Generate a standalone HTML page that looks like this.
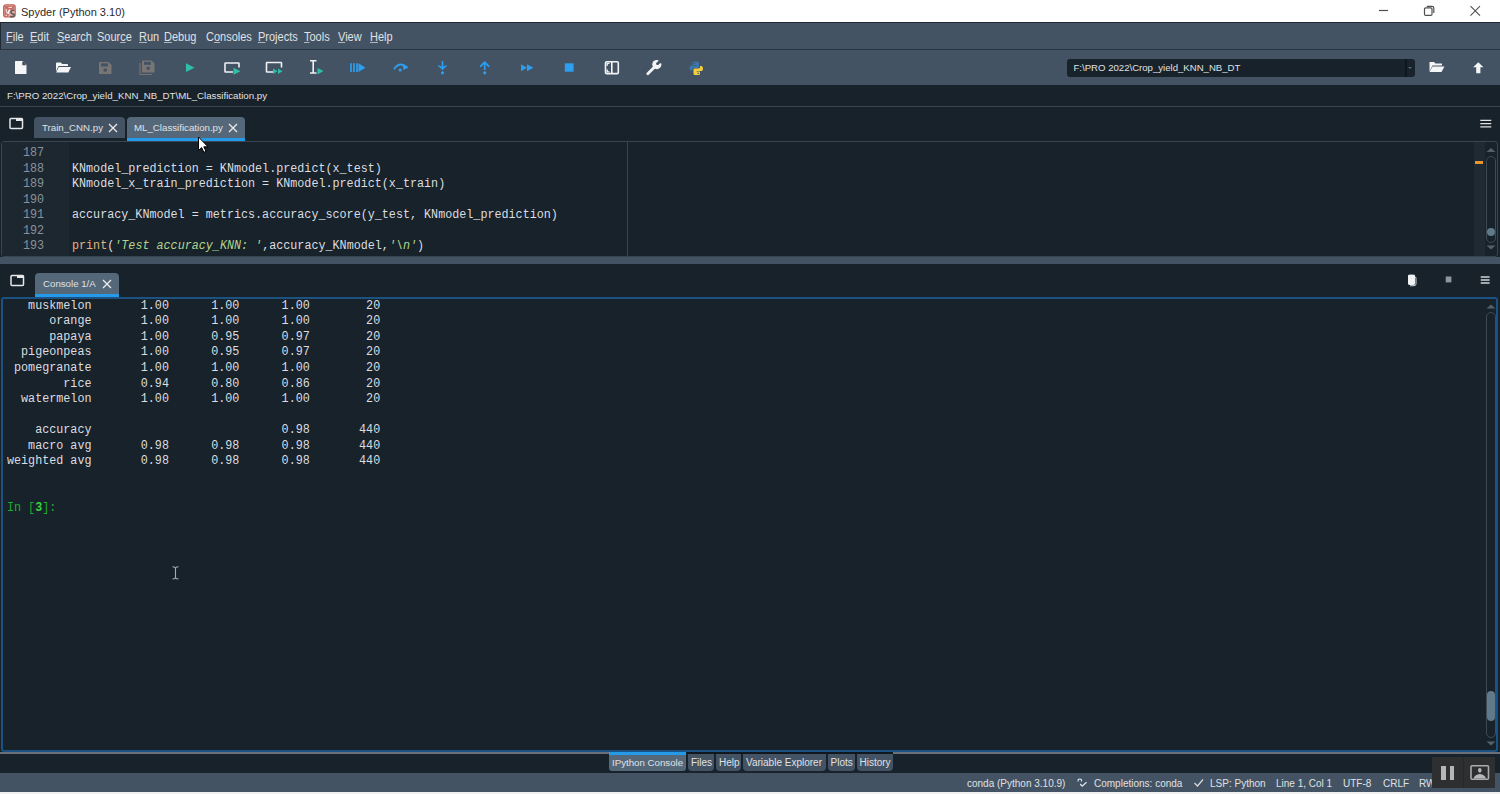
<!DOCTYPE html>
<html><head><meta charset="utf-8">
<style>
html,body{margin:0;padding:0;}
body{width:1500px;height:794px;overflow:hidden;position:relative;background:#17222a;font-family:"Liberation Sans",sans-serif;}
.a{position:absolute;}
.ui{font-family:"Liberation Sans",sans-serif;white-space:pre;}
.mono{font-family:"Liberation Mono",monospace;white-space:pre;}
#title{left:0;top:0;width:1500px;height:22px;background:#fff;}
#menubar{left:0;top:22px;width:1500px;height:28px;background:#435363;box-sizing:border-box;border-top:1px solid #1f2933;border-bottom:1px solid #2a3440;}
.menu{top:6.5px;font-size:12px;color:#E0E1E3;transform:scaleX(0.915);transform-origin:0 0;}
.menu u{text-decoration:underline;text-decoration-color:#aeb6be;text-underline-offset:0.6px;}
#toolbar{left:0;top:50px;width:1500px;height:35px;background:#435363;}
#pathbar{left:0;top:85px;width:1500px;height:21px;background:#17222a;border-bottom:1px solid #3b4654;}
.tab{background:#435363;border-radius:4px 4px 0 0;box-sizing:border-box;font-size:9.7px;color:#E0E1E3;}
.code{font-size:12.5px;line-height:15.55px;transform:scaleX(0.9387);transform-origin:0 0;}
.btab{background:#435363;border-radius:0 0 4px 4px;box-sizing:border-box;font-size:9.7px;color:#E0E1E3;white-space:pre;font-family:"Liberation Sans",sans-serif;}
.frame{box-sizing:border-box;border:1px solid #3a4552;border-radius:3px;}
</style></head><body>

<!-- TITLE BAR -->
<div id="title" class="a">
  <svg class="a" style="left:3px;top:4px" width="13" height="14">
    <rect x="0.6" y="0.8" width="11.6" height="12.2" rx="2.2" fill="#e9b4ae" stroke="#c4625a" stroke-width="1.2"/>
    <path d="M1.5 2 L11 2 L11 5 L7.5 6 L5 13 L1.5 13 Z" fill="#c86c64"/>
    <path d="M5.5 3.5 L9 3.3 M3 5 L4 9 M2.5 11 L4 11.5" stroke="#f5dcd9" stroke-width="1.2"/>
    <path d="M6.6 5.5 L4.8 10" stroke="#fff" stroke-width="1.5"/>
    <path d="M11.5 6.5 Q8.5 5.8 8 7.8 Q7.8 9.3 10 10 Q11.8 10.8 11 12 Q10 13 7 12.5" fill="none" stroke="#5a5a5a" stroke-width="1.6"/>
  </svg>
  <div class="a ui" style="left:21px;top:5.5px;font-size:11px;color:#2a2a2a;">Spyder (Python 3.10)</div>
  <svg class="a" style="left:1370px;top:0" width="130" height="22">
    <path d="M9 10.5 H18" stroke="#505050" stroke-width="1.2"/>
    <rect x="54.5" y="7.8" width="7.5" height="7.6" rx="1.2" fill="none" stroke="#505050" stroke-width="1.2"/>
    <path d="M56.8 6.3 H62 Q63.8 6.3 63.8 8.1 V13" fill="none" stroke="#505050" stroke-width="1.2"/>
    <path d="M100.5 6.2 L110 15.7 M110 6.2 L100.5 15.7" stroke="#505050" stroke-width="1.1"/>
  </svg>
</div>

<!-- MENU BAR -->
<div id="menubar" class="a">
  <div class="a" style="left:0;top:0;width:1px;height:26px;background:#1f2933"></div>
  <div class="a menu ui" style="left:6px"><u>F</u>ile</div>
  <div class="a menu ui" style="left:29.5px"><u>E</u>dit</div>
  <div class="a menu ui" style="left:56.5px"><u>S</u>earch</div>
  <div class="a menu ui" style="left:97px">Sour<u>c</u>e</div>
  <div class="a menu ui" style="left:138.5px"><u>R</u>un</div>
  <div class="a menu ui" style="left:164px"><u>D</u>ebug</div>
  <div class="a menu ui" style="left:205.5px">C<u>o</u>nsoles</div>
  <div class="a menu ui" style="left:258px"><u>P</u>rojects</div>
  <div class="a menu ui" style="left:304px"><u>T</u>ools</div>
  <div class="a menu ui" style="left:338px"><u>V</u>iew</div>
  <div class="a menu ui" style="left:370px"><u>H</u>elp</div>
</div>

<!-- TOOLBAR -->
<div id="toolbar" class="a">
<svg class="a" style="left:0;top:0" width="720" height="35">
  <!-- new file -->
  <path d="M15 11.5 Q15 11 15.5 11 L22.5 11 L26.5 15 L26.5 23.5 Q26.5 24 26 24 L15.5 24 Q15 24 15 23.5 Z" fill="#f4f5f6"/>
  <path d="M22.3 11.3 L22.3 15.2 L26.2 15.2 Z" fill="#435363"/>
  <path d="M23 11.8 L23 14.6 L25.8 14.6 Z" fill="#3a4350"/>
  <!-- open folder -->
  <path d="M56 13.3 Q56 12.5 56.8 12.5 L60.8 12.5 L62.3 14 L67.2 14 Q68 14 68 14.8 L68 16 L58.5 16 L56 21.5 Z" fill="#f4f5f6"/>
  <path d="M58.8 16.9 L71 16.9 L68.3 22.6 L56.2 22.6 Z" fill="#f4f5f6"/>
  <!-- save (disabled) -->
  <path d="M99 12.5 Q99 12 99.5 12 L108.5 12 L111.5 15 L111.5 23.5 Q111.5 24 111 24 L99.5 24 Q99 24 99 23.5 Z" fill="#787674"/>
  <rect x="101" y="13.3" width="7" height="3.2" fill="#435363"/>
  <circle cx="105.2" cy="20" r="1.8" fill="#435363"/>
  <!-- save all (disabled) -->
  <path d="M140 13 L140 24.5 L152 24.5" fill="none" stroke="#74726f" stroke-width="1.2"/>
  <path d="M142 11 Q142 10.5 142.5 10.5 L151.5 10.5 L154.5 13.5 L154.5 22 Q154.5 22.5 154 22.5 L142.5 22.5 Q142 22.5 142 22 Z" fill="#787674"/>
  <rect x="144" y="11.8" width="7" height="3" fill="#435363"/>
  <circle cx="148.2" cy="18.3" r="1.8" fill="#435363"/>
  <!-- run -->
  <path d="M186 13.3 L194.5 17.7 L186 22 Z" fill="#2fbfa9"/>
  <!-- run cell -->
  <path d="M233 22 L225.5 22 Q225 22 225 21.5 L225 13.5 Q225 13 225.5 13 L238.5 13 Q239 13 239 13.5 L239 17.5" fill="none" stroke="#eef0f2" stroke-width="1.6"/>
  <path d="M233.5 17.8 L240.5 21.2 L233.5 24.7 Z" fill="#2fbfa9"/>
  <!-- run cell and advance -->
  <path d="M273 22 L267 22 Q266.5 22 266.5 21.5 L266.5 13 Q266.5 12.5 267 12.5 L281 12.5 Q281.5 12.5 281.5 13 L281.5 17.5" fill="none" stroke="#eef0f2" stroke-width="1.6"/>
  <path d="M273 18.5 L277.5 21.3 L273 24 Z M278 18.5 L282.5 21.3 L278 24 Z" fill="#2fbfa9"/>
  <!-- run selection -->
  <path d="M310 10.8 L316.5 10.8 M313.2 10.8 L313.2 23 M310 23 L316.5 23" fill="none" stroke="#eef0f2" stroke-width="1.6"/>
  <path d="M317.5 18 L323.5 21 L317.5 24.5 Z" fill="#2fbfa9"/>
  <!-- debug -->
  <path d="M351 13.3 L351 22 M354 13.3 L354 22 M357 13.3 L357 22" stroke="#2c9ff0" stroke-width="1.7"/>
  <path d="M358.5 13.3 L365.5 17.7 L358.5 22 Z" fill="#2c9ff0"/>
  <!-- step -->
  <path d="M394.3 18.6 Q399.5 12 405 16" fill="none" stroke="#2c9ff0" stroke-width="1.7" stroke-linecap="round"/>
  <path d="M403 14.2 L408.2 17.2 L403.6 19.6 Z" fill="#2c9ff0" stroke="#2c9ff0" stroke-width="0.6" stroke-linejoin="round"/>
  <circle cx="400.2" cy="20" r="1.6" fill="#2c9ff0"/>
  <!-- step into -->
  <path d="M442.5 11 L442.5 17" fill="none" stroke="#2c9ff0" stroke-width="1.6"/>
  <path d="M438.2 15.6 L442.5 17.2 L446.8 15.6 L442.5 19.8 Z" fill="#2c9ff0" stroke="#2c9ff0" stroke-width="0.8" stroke-linejoin="round"/>
  <circle cx="442.5" cy="22.8" r="1.6" fill="#2c9ff0"/>
  <!-- step return -->
  <path d="M484.7 12.5 L484.7 20" fill="none" stroke="#2c9ff0" stroke-width="1.6"/>
  <path d="M480.8 16.2 L484.7 12.2 L488.6 16.2" fill="none" stroke="#2c9ff0" stroke-width="1.8" stroke-linecap="round"/>
  <circle cx="484.7" cy="22.8" r="1.6" fill="#2c9ff0"/>
  <!-- continue -->
  <path d="M521 14.3 L527 17.7 L521 21.3 Z M527 14.3 L533.3 17.7 L527 21.3 Z" fill="#2c9ff0"/>
  <!-- stop -->
  <rect x="564.8" y="13.3" width="8.8" height="8.4" fill="#2c9ff0"/>
  <!-- maximize pane -->
  <rect x="605.5" y="61.8" width="12.8" height="11.8" rx="1.2" fill="none" stroke="#f2f3f5" stroke-width="1.6" transform="translate(0,-50)"/>
  <path d="M611.8 11.8 L611.8 23.6" stroke="#f2f3f5" stroke-width="1.6"/>
  <path d="M609.5 13.4 L607.2 13.4 L607.2 15.8 M607.2 19.4 L607.2 21.9 L609.5 21.9" fill="none" stroke="#f2f3f5" stroke-width="1.4"/>
  <!-- wrench -->
  <path d="M647.8 23.8 L654.3 17.3" stroke="#f2f3f5" stroke-width="2.8" stroke-linecap="round"/>
  <circle cx="656.8" cy="14.6" r="4.6" fill="#f2f3f5"/>
  <path d="M656.6 14.6 L659.2 8.8 L663.2 12.6 Z" fill="#435363"/>
  <circle cx="657.6" cy="13.6" r="1.5" fill="#435363"/>
  <!-- python -->
  <g transform="translate(689,11)">
  <path d="M4.5 0.5 H8.5 Q10 0.5 10 2 V6 Q10 7 9 7 H5 Q3.5 7 3.5 8.5 V9.5 H2 Q0.5 9.5 0.5 7 Q0.5 4.5 2 4.5 H7 V4 H3.5 V2 Q3.5 0.5 4.5 0.5 Z" fill="#3b77ad"/>
  <path d="M10 14 H6 Q4.5 14 4.5 12.5 V8.5 Q4.5 7.5 5.5 7.5 H9.5 Q11 7.5 11 6 V5 H12.5 Q14 5 14 7.5 Q14 10 12.5 10 H7.5 V10.5 H11 V12.5 Q11 14 10 14 Z" fill="#f3ce3f"/>
  <circle cx="5.3" cy="2.2" r="0.8" fill="#435363"/>
  <circle cx="9.2" cy="12.3" r="0.8" fill="#435363"/>
  </g>
</svg>
<!-- path combobox -->
<div class="a" style="left:1067px;top:9px;width:348px;height:17.5px;background:#17222a;border-radius:3px;"></div>
<div class="a" style="left:1404.5px;top:9px;width:2px;height:17.5px;background:#0f171e"></div>
<div class="a" style="left:1408px;top:17px;width:0;height:0;border-left:2px solid transparent;border-right:2px solid transparent;border-top:2px solid #5b6672"></div>
<div class="a ui" style="left:1073.5px;top:12px;font-size:9.6px;color:#E0E1E3">F:\PRO 2022\Crop_yield_KNN_NB_DT</div>
<svg class="a" style="left:1420px;top:0" width="80" height="35">
  <path d="M9.5 12 L14 12 L15.5 13.5 L22 13.5 L22 15.5 L12.5 15.5 L9.5 21.5 Z" fill="#f4f5f6"/>
  <path d="M12.5 16.5 L24.5 16.5 L21.5 22 L9.5 22 Z" fill="#f4f5f6"/>
  <path d="M58.3 12.3 L63.4 17.3 L60.4 17.3 L60.4 23.2 L56.2 23.2 L56.2 17.3 L53.2 17.3 Z" fill="#f4f5f6"/>
</svg>
</div>

<!-- PATH BAR -->
<div id="pathbar" class="a">
  <div class="a ui" style="left:7px;top:5px;font-size:9.7px;color:#E0E1E3">F:\PRO 2022\Crop_yield_KNN_NB_DT\ML_Classification.py</div>
</div>

<!-- EDITOR TABS -->
<svg class="a" style="left:9px;top:117px" width="16" height="14"><rect x="1" y="1.5" width="12.5" height="10" rx="1" fill="none" stroke="#e6e8ea" stroke-width="1.5"/><rect x="7" y="1.5" width="6.5" height="2.5" fill="#e6e8ea"/></svg>
<div class="a tab" style="left:34px;top:117px;width:91px;height:21px;"><span class="a" style="left:8px;top:5px">Train_CNN.py</span>
<svg class="a" style="left:74px;top:5.5px" width="10" height="10"><path d="M1 1L9 9M9 1L1 9" stroke="#e8eaec" stroke-width="1.3"/></svg></div>
<div class="a tab" style="left:127px;top:117px;width:118px;height:24px;background:#54687A;border-bottom:3px solid #259AE9"><span class="a" style="left:7px;top:5px">ML_Classification.py</span>
<svg class="a" style="left:101px;top:5.5px" width="10" height="10"><path d="M1 1L9 9M9 1L1 9" stroke="#e8eaec" stroke-width="1.3"/></svg></div>
<!-- editor hamburger -->
<svg class="a" style="left:1480px;top:118px" width="12" height="12"><path d="M0.3 2.3H11.3M0.3 5.6H11.3M0.3 8.9H11.3" stroke="#e0e2e4" stroke-width="1.3"/></svg>
<!-- EDITOR -->
<div class="a frame" style="left:1px;top:141px;width:1497px;height:116px;"></div>
<div class="a" style="left:2px;top:142px;width:67px;height:114px;background:#1d2730"></div>
<div class="a" style="left:1474px;top:142px;width:11px;height:114px;background:#202a33"></div>
<div class="a" style="left:1475px;top:161px;width:8px;height:3px;background:#e8962a"></div>
<div class="a" style="left:627px;top:142px;width:1px;height:114px;background:#39434f"></div>
<div class="a mono code" style="left:0;top:146px;width:47px;text-align:right;color:#87919a">187
188
189
190
191
192
193</div>
<div class="a mono code" style="left:72px;top:146px;color:#dcdde0">
KNmodel_prediction = KNmodel.predict(x_test)
KNmodel_x_train_prediction = KNmodel.predict(x_train)

accuracy_KNmodel = metrics.accuracy_score(y_test, KNmodel_prediction)

<span style="color:#e2b27c">print</span>(<span style="color:#b3d48e;font-style:italic">'Test accuracy_KNN: '</span>,accuracy_KNmodel,<span style="color:#b3d48e;font-style:italic">'\n'</span>)</div>
<!-- editor scrollbar -->
<svg class="a" style="left:1485px;top:147px" width="12" height="105">
  <path d="M1.5 5 L6 1 L10.5 5 Z" fill="#55606c"/>
  <rect x="1.5" y="9.5" width="9" height="86" rx="4.5" fill="none" stroke="#3f4a56" stroke-width="1"/>
  <circle cx="6" cy="85" r="4" fill="#60798B"/>
  <path d="M1.5 98.5 L10.5 98.5 L6 102.5 Z" fill="#55606c"/>
</svg>

<!-- SPLITTER -->
<div class="a" style="left:0;top:257px;width:1500px;height:7px;background:#435363"></div>

<!-- CONSOLE TAB -->
<svg class="a" style="left:10px;top:274px" width="16" height="14"><rect x="1" y="1.5" width="12.5" height="10" rx="1" fill="none" stroke="#e6e8ea" stroke-width="1.5"/><rect x="7" y="1.5" width="6.5" height="2.5" fill="#e6e8ea"/></svg>
<div class="a tab" style="left:35px;top:273px;width:84px;height:24px;background:#54687A;border-bottom:3px solid #259AE9"><span class="a" style="left:8px;top:5px">Console 1/A</span>
<svg class="a" style="left:67px;top:5.5px" width="10" height="10"><path d="M1 1L9 9M9 1L1 9" stroke="#e8eaec" stroke-width="1.3"/></svg></div>
<!-- console right icons -->
<svg class="a" style="left:1405px;top:272px" width="90" height="16">
  <path d="M3 3.5 Q3 2.5 6.5 2.5 Q10 2.5 10 3.5 L10 12 Q10 13 6.5 13 Q3 13 3 12 Z" fill="#f0f1f3"/>
  <path d="M10 5 L11 5.5 L11 12.5 Q11 13.8 7 13.8 L5 13.8" fill="none" stroke="#d8dadc" stroke-width="1"/>
  <rect x="40.7" y="4.5" width="5.7" height="5.9" fill="#8f969d"/>
  <path d="M75.7 5H84.6M75.7 8H84.6M75.7 11H84.6" stroke="#d0d3d6" stroke-width="1.4"/>
</svg>
<!-- CONSOLE -->
<div class="a frame" style="left:1px;top:297px;width:1497px;height:455px;border:2px solid #1c5282;"></div>
<div class="a mono code" style="left:6.7px;top:298.8px;color:#dcdde0">   muskmelon       1.00      1.00      1.00        20
      orange       1.00      1.00      1.00        20
      papaya       1.00      0.95      0.97        20
  pigeonpeas       1.00      0.95      0.97        20
 pomegranate       1.00      1.00      1.00        20
        rice       0.94      0.80      0.86        20
  watermelon       1.00      1.00      1.00        20

    accuracy                           0.98       440
   macro avg       0.98      0.98      0.98       440
weighted avg       0.98      0.98      0.98       440


<span style="color:#1fae2a">In [</span><span style="color:#38d43f;font-weight:bold">3</span><span style="color:#1fae2a">]:</span></div>
<!-- console scrollbar -->
<svg class="a" style="left:1485px;top:303px" width="12" height="445">
  <path d="M1.5 5.5 L6 1.5 L10.5 5.5 Z" fill="#55606c"/>
  <rect x="1.5" y="9.5" width="9" height="425" rx="4.5" fill="none" stroke="#3f4a56" stroke-width="1"/>
  <rect x="2" y="388" width="8" height="30" rx="4" fill="#60798B"/>
  <path d="M1.5 438.5 L10.5 438.5 L6 442.5 Z" fill="#55606c"/>
</svg>

<!-- BOTTOM -->
<div class="a" style="left:0;top:752px;width:609px;height:1.5px;background:#6a7078"></div>
<div class="a" style="left:893px;top:752px;width:607px;height:1.5px;background:#6a7078"></div>
<div class="a" style="left:687px;top:752px;width:206px;height:1.5px;background:#10171e"></div>
<div class="a btab" style="left:609px;top:752px;width:77px;height:19px;background:#54687A;border-top:3px solid #259AE9;border-radius:0 0 3px 3px"><span class="a" style="left:3px;top:1.8px">IPython Console</span></div>
<div class="a btab" style="left:688px;top:753.5px;width:26px;height:17.5px;"><span class="a" style="left:3px;top:3.2px;font-size:10px">Files</span></div>
<div class="a btab" style="left:716px;top:753.5px;width:25px;height:17.5px;"><span class="a" style="left:3px;top:3.2px;font-size:10px">Help</span></div>
<div class="a btab" style="left:743px;top:753.5px;width:83px;height:17.5px;"><span class="a" style="left:3px;top:3.2px;font-size:10px">Variable Explorer</span></div>
<div class="a btab" style="left:827.5px;top:753.5px;width:27px;height:17.5px;"><span class="a" style="left:3px;top:3.2px;font-size:10px">Plots</span></div>
<div class="a btab" style="left:856.5px;top:753.5px;width:36px;height:17.5px;"><span class="a" style="left:3px;top:3.2px;font-size:10px">History</span></div>
<div class="a" style="left:0;top:773px;width:1500px;height:19px;background:#435363"></div>
<div class="a ui" style="left:967px;top:778px;font-size:10px;color:#E0E1E3">conda (Python 3.10.9)</div>
<svg class="a" style="left:1076px;top:777px" width="13" height="12"><path d="M2.2 4.5 Q1.5 2 3.8 2 Q6 2 5.4 4.5" fill="none" stroke="#e6e8ea" stroke-width="1.1"/><path d="M4.2 7 L6.2 9.2 L10.5 5.2" fill="none" stroke="#e6e8ea" stroke-width="1.2"/></svg>
<div class="a ui" style="left:1094px;top:778px;font-size:10px;color:#E0E1E3">Completions: conda</div>
<svg class="a" style="left:1193px;top:777px" width="12" height="12"><path d="M1.5 6 L4.5 9 L10 2.5" fill="none" stroke="#d9dcdf" stroke-width="1.2"/></svg>
<div class="a ui" style="left:1210px;top:778px;font-size:10px;color:#E0E1E3">LSP: Python</div>
<div class="a ui" style="left:1276px;top:778px;font-size:10px;color:#E0E1E3">Line 1, Col 1</div>
<div class="a ui" style="left:1343px;top:778px;font-size:10px;color:#E0E1E3">UTF-8</div>
<div class="a ui" style="left:1383px;top:778px;font-size:10px;color:#E0E1E3">CRLF</div>
<div class="a ui" style="left:1419px;top:778px;font-size:10px;color:#E0E1E3">RW</div>
<!-- overlay buttons (video player) -->
<div class="a" style="left:1432px;top:756.5px;width:31px;height:31px;background:#2e2f30"></div>
<div class="a" style="left:1463px;top:756.5px;width:32px;height:31px;background:#2e2f30;border-left:1px solid #26282a;box-sizing:border-box"></div>
<div class="a" style="left:1441px;top:766px;width:4.5px;height:14px;background:#b3b5b6"></div>
<div class="a" style="left:1449.5px;top:766px;width:4.5px;height:14px;background:#b3b5b6"></div>
<svg class="a" style="left:1468px;top:764px" width="24" height="18"><rect x="3" y="1.8" width="17.5" height="13.5" rx="1" fill="none" stroke="#a9abac" stroke-width="1.6"/><ellipse cx="11.8" cy="6.3" rx="1.7" ry="2.4" fill="#b5b7b8"/><path d="M5.5 14.5 Q6.5 10.5 11.8 10 Q17 10.5 18 14.5 Z" fill="#b5b7b8"/></svg>
<div class="a" style="left:0;top:792px;width:1500px;height:2px;background:#f0f0f0"></div>

<!-- cursors -->
<svg class="a" style="left:197px;top:136px" width="14" height="18"><path d="M1.5 1 L1.5 14.5 L4.6 11.6 L6.9 16.3 L9 15.4 L6.8 10.8 L11 10.8 Z" fill="#fff" stroke="#000" stroke-width="1" stroke-linejoin="round"/></svg>
<svg class="a" style="left:170px;top:565px" width="11" height="16"><path d="M2.5 1.8 Q4.5 1.8 5.5 2.8 Q6.5 1.8 8.5 1.8 M5.5 2.8 L5.5 13 M2.5 14 Q4.5 14 5.5 13 Q6.5 14 8.5 14" fill="none" stroke="#a3abb3" stroke-width="1.1"/></svg>
</body></html>
